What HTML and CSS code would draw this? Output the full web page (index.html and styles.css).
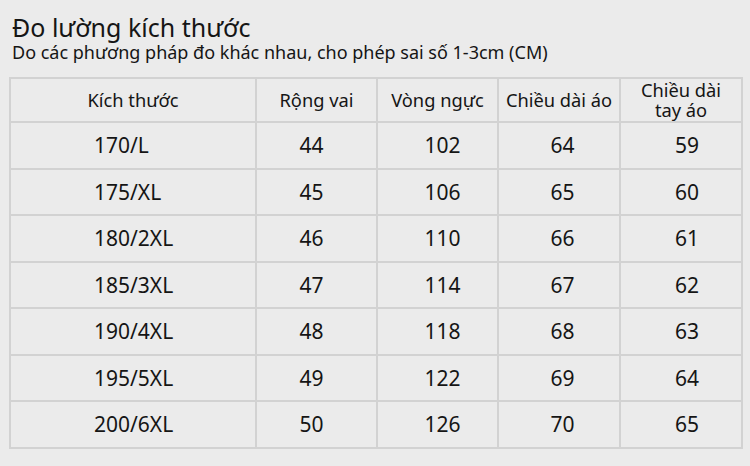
FILE: index.html
```html
<!DOCTYPE html>
<html lang="vi">
<head>
<meta charset="utf-8">
<link rel="stylesheet" href="styles.css">
</head>
<body>
<div class="page">
  <h1 class="title">Đo lường kích thước</h1>
  <p class="subtitle">Do các phương pháp đo khác nhau, cho phép sai số 1-3cm (CM)</p>
  <table class="sizes">
    <colgroup>
      <col class="c1"><col class="c2"><col class="c3"><col class="c4"><col class="c5">
    </colgroup>
    <thead>
      <tr><th>Kích thước</th><th>Rộng vai</th><th>Vòng ngực</th><th>Chiều dài áo</th><th>Chiều dài<br>tay áo</th></tr>
    </thead>
    <tbody>
      <tr><td class="size">170/L</td><td class="v2">44</td><td class="v3">102</td><td class="v4">64</td><td class="v5">59</td></tr>
      <tr><td class="size">175/XL</td><td class="v2">45</td><td class="v3">106</td><td class="v4">65</td><td class="v5">60</td></tr>
      <tr><td class="size">180/2XL</td><td class="v2">46</td><td class="v3">110</td><td class="v4">66</td><td class="v5">61</td></tr>
      <tr><td class="size">185/3XL</td><td class="v2">47</td><td class="v3">114</td><td class="v4">67</td><td class="v5">62</td></tr>
      <tr><td class="size">190/4XL</td><td class="v2">48</td><td class="v3">118</td><td class="v4">68</td><td class="v5">63</td></tr>
      <tr><td class="size">195/5XL</td><td class="v2">49</td><td class="v3">122</td><td class="v4">69</td><td class="v5">64</td></tr>
      <tr><td class="size">200/6XL</td><td class="v2">50</td><td class="v3">126</td><td class="v4">70</td><td class="v5">65</td></tr>
    </tbody>
  </table>
</div>
</body>
</html>
```
FILE: styles.css
```css
html, body {
  margin: 0;
  padding: 0;
  background: #ebebeb;
}
body {
  width: 750px;
  height: 466px;
  overflow: hidden;
  font-family: "Noto Sans", "Open Sans", sans-serif;
  color: #151515;
}
.page {
  padding: 12px 9px 0 9px;
}
.title {
  margin: 0 0 0 3px;
  font-size: 25px;
  font-weight: 400;
  line-height: 30px;
}
.subtitle {
  margin: 0 0 0 3px;
  font-size: 18px;
  line-height: 21px;
}
.sizes {
  margin-top: 14px;
  width: 732px;
  border-collapse: collapse;
  table-layout: fixed;
  border: 2px solid #d2d2d2;
}
.c1 { width: 246px; }
.c2 { width: 121px; }
.c3 { width: 121px; }
.c4 { width: 122px; }
.c5 { width: 122px; }
.sizes th, .sizes td {
  border: 2px solid #d2d2d2;
  padding: 0;
  font-weight: 400;
  text-align: center;
}
.sizes th {
  height: 42px;
  font-size: 18.3px;
  line-height: 20px;
}
.sizes td {
  height: 44.5px;
  font-size: 21px;
}
.sizes td.size {
  text-align: left;
  padding-left: 83px;
}
.sizes td.v2 { padding-right: 10px; }
.sizes td.v3 { padding-left: 10px; }
.sizes td.v4 { padding-left: 7px; }
.sizes td.v5 { padding-left: 12px; }
```
